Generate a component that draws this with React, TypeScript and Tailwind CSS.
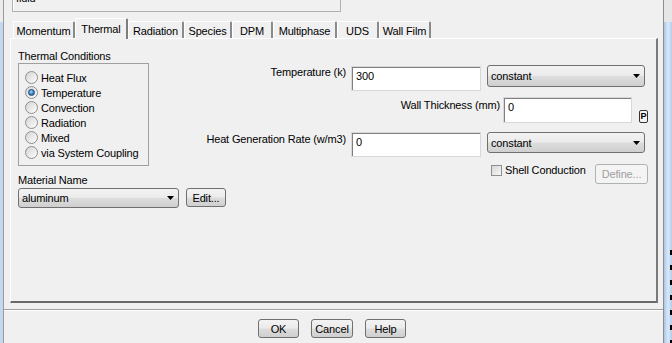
import React from "react";

const btnGrad =
  "bg-[linear-gradient(#f3f3f3_0%,#ebebeb_48%,#dddddd_52%,#cfcfcf_100%)]";

function Radio({ label, checked }: { label: string; checked?: boolean }) {
  return (
    <div className="flex items-center h-[15px]">
      <span className="w-[13px] h-[13px] shrink-0 rounded-full border border-[#8f8f8f] bg-[linear-gradient(135deg,#d4d4d4,#fdfdfd)] flex items-center justify-center">
        {checked && (
          <span className="w-[7px] h-[7px] rounded-full border border-[#174a7c] bg-[radial-gradient(circle_at_40%_35%,#9fd3f7,#2a6fb0_70%)]" />
        )}
      </span>
      <span className="ml-[3px] leading-[14px] whitespace-nowrap">{label}</span>
    </div>
  );
}

function Combo({ text, w, h }: { text: string; w: string; h: string }) {
  return (
    <div
      className={`${w} ${h} shrink-0 rounded-[3px] border border-[#707070] ${btnGrad} flex items-center pl-[3px] pr-[4px]`}
    >
      <span className="flex-1 leading-[14px]">{text}</span>
      <svg width="7" height="4" viewBox="0 0 7 4">
        <path d="M0 0H7L3.5 4Z" fill="#000" />
      </svg>
    </div>
  );
}

function Field({ value, cls }: { value: string; cls: string }) {
  return (
    <div
      className={`${cls} shrink-0 bg-white border border-[#d8d8d8] shadow-[inset_1px_1px_0_#808080] pl-[4px] pt-[2px] leading-[14px]`}
    >
      {value}
    </div>
  );
}

function Button({
  label,
  cls,
  disabled,
}: {
  label: string;
  cls: string;
  disabled?: boolean;
}) {
  return (
    <div
      className={`${cls} shrink-0 rounded-[3px] border flex items-center justify-center leading-[14px] ${
        disabled
          ? "border-[#adb2b5] bg-[#f4f4f4] text-[#a0a0a0]"
          : `border-[#707070] ${btnGrad}`
      }`}
    >
      {label}
    </div>
  );
}

const tabs = [
  { label: "Momentum", w: "w-[62px]" },
  { label: "Thermal", w: "w-[53px]", active: true },
  { label: "Radiation", w: "w-[56px]" },
  { label: "Species", w: "w-[48px]" },
  { label: "DPM", w: "w-[41px]" },
  { label: "Multiphase", w: "w-[64px]" },
  { label: "UDS", w: "w-[42px]" },
  { label: "Wall Film", w: "w-[52px]" },
];

export default function App() {
  return (
    <div className="w-[672px] h-[343px] overflow-hidden flex bg-[#f0f0f0] text-[11px] tracking-[-0.15px] text-black font-['Liberation_Sans',Arial,sans-serif]">
      {/* left window frame */}
      <div className="w-[3px] flex flex-col shrink-0">
        <div className="h-[22px] bg-[#ececec]" />
        <div className="flex-1 bg-[#c3d9f2]" />
      </div>
      <div className="w-px bg-[#9a9a9a] shrink-0" />

      {/* main */}
      <div className="w-[659px] shrink-0 flex flex-col">
        {/* top text box (cut) */}
        <div className="ml-[8px] -mt-[10px] w-[329px] h-[22px] border border-[#b0b0b0] shadow-[inset_1px_1px_0_#ffffff] pl-[3px] leading-[14px] text-[#000]">
          fluid
        </div>

        {/* tabs */}
        <div className="mt-[6px] ml-[9px] h-[20px] flex items-end">
          {tabs.map((t) =>
            t.active ? (
              <div
                key={t.label}
                className={`${t.w} h-[21px] -mb-px relative z-10 bg-[#f0f0f0] border-t border-l border-t-white border-l-white border-r-2 border-r-[#7d7d7d] rounded-t-[2px] flex justify-center pt-[3px] leading-[14px]`}
              >
                {t.label}
              </div>
            ) : (
              <div
                key={t.label}
                className={`${t.w} h-[17px] bg-[#f0f0f0] border-t border-l border-t-white border-l-white border-r-2 border-r-[#8a8a8a] rounded-t-[2px] flex justify-center pt-[2px] leading-[14px]`}
              >
                {t.label}
              </div>
            )
          )}
        </div>

        {/* panel */}
        <div className="ml-[6px] w-[648px] h-[265px] border-t border-l border-t-white border-l-white border-r-2 border-b-2 border-r-[#7a7a7a] border-b-[#6a6a6a] flex pt-[10px] pl-[7px]">
          {/* left column */}
          <div className="w-[187px] shrink-0 flex flex-col">
            <div className="h-[14px] leading-[14px]">Thermal Conditions</div>
            <div className="w-[131px] border border-[#a0a0a0] pt-[6px] pb-[5px] pl-[6px]">
              <Radio label="Heat Flux" />
              <Radio label="Temperature" checked />
              <Radio label="Convection" />
              <Radio label="Radiation" />
              <Radio label="Mixed" />
              <Radio label="via System Coupling" />
            </div>
            <div className="mt-[7px] h-[14px] leading-[14px]">Material Name</div>
            <div className="mt-[1px] flex items-start">
              <Combo text="aluminum" w="w-[161px]" h="h-[20px]" />
              <Button label="Edit..." cls="ml-[7px] w-[40px] h-[19px]" />
            </div>
          </div>

          {/* right column */}
          <div className="flex flex-col pt-[16px]">
            <div className="flex items-start h-[26px]">
              <div className="w-[141px] shrink-0 text-right leading-[14px] whitespace-nowrap">
                Temperature (k)
              </div>
              <Field value="300" cls="ml-[5px] mt-[1px] w-[130px] h-[25px]" />
              <div className="ml-[6px]">
                <Combo text="constant" w="w-[158px]" h="h-[22px]" />
              </div>
            </div>

            <div className="mt-[6px] flex items-start h-[26px]">
              <div className="w-[295px] shrink-0 mt-[1px] text-right leading-[14px] whitespace-nowrap">
                Wall Thickness (mm)
              </div>
              <Field value="0" cls="ml-[3px] w-[129px] h-[26px]" />
              <div className="ml-[7px] mt-[13px] w-[9px] h-[13px] shrink-0 rounded-[2px] border border-[#333] bg-[#f4f4f4] flex items-center justify-center text-[9px] leading-[9px] font-bold">
                P
              </div>
            </div>

            <div className="mt-[9px] flex items-start h-[25px]">
              <div className="w-[141px] shrink-0 text-right leading-[14px] whitespace-nowrap">
                Heat Generation Rate (w/m3)
              </div>
              <Field value="0" cls="ml-[5px] w-[130px] h-[25px]" />
              <div className="ml-[6px]">
                <Combo text="constant" w="w-[158px]" h="h-[21px]" />
              </div>
            </div>

            <div className="mt-[7px] w-[443px] flex items-start pl-[286px]">
              <span className="mt-[1px] w-[11px] h-[11px] shrink-0 border border-[#8e8f8f] bg-[linear-gradient(135deg,#d6d6d6,#f8f8f8)]" />
              <span className="ml-[3px] -mt-px leading-[14px] whitespace-nowrap">
                Shell Conduction
              </span>
              <Button label="Define..." cls="ml-auto w-[53px] h-[20px]" disabled />
            </div>
          </div>
        </div>

        {/* separator */}
        <div className="mt-[6px] h-px bg-[#a0a0a0]" />
        <div className="h-px bg-white" />

        {/* buttons */}
        <div className="mt-[8px] flex justify-center gap-[12px] pr-[3px]">
          <Button label="OK" cls="w-[41px] h-[19px]" />
          <Button label="Cancel" cls="w-[42px] h-[19px]" />
          <Button label="Help" cls="w-[41px] h-[19px]" />
        </div>
      </div>

      {/* right window frame */}
      <div className="w-px bg-[#8d8d8d] shrink-0" />
      <div className="flex-1 flex flex-col">
        <div className="h-[22px] bg-[#e6e6e6]" />
        <div className="flex-1 flex bg-[linear-gradient(90deg,#a8c5e8,#dbe9f8_50%,#b3cdeb)]">
          <div className="flex-1" />
          <div className="w-[2px] mt-[228px] bg-[repeating-linear-gradient(#000_0px,#000_5px,transparent_5px,transparent_15px)]" />
        </div>
      </div>
    </div>
  );
}
